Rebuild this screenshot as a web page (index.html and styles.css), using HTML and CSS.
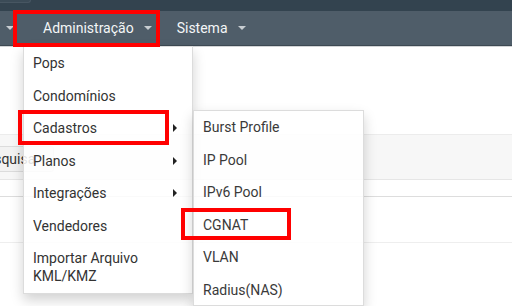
FILE: index.html
```html
<!DOCTYPE html>
<html lang="pt-BR">
<head>
    <meta charset="UTF-8">
    <meta name="viewport" content="width=device-width, initial-scale=1.0">
    <title>Administração - Cadastros</title>
    <link rel="stylesheet" href="styles.css">
</head>
<body>
    <div class="topbar">
        <div class="top-input"></div>
    </div>

    <!-- Main navigation -->
    <nav class="navbar">
        <span class="caret first-caret"></span>
        <a class="nav-item">Administração <span class="caret"></span></a>
        <a class="nav-item">Sistema <span class="caret"></span></a>
    </nav>

    <!-- Page content behind the menus -->
    <main class="content">
        <div class="toolbar">
            <button class="search-btn">Pesquisa</button>
        </div>
        <div class="row row-first"></div>
        <div class="row"></div>
    </main>

    <!-- Administração dropdown -->
    <ul class="dropdown menu-admin">
        <li>Pops</li>
        <li>Condomínios</li>
        <li class="has-sub">Cadastros <span class="arrow"></span></li>
        <li class="has-sub">Planos <span class="arrow"></span></li>
        <li class="has-sub">Integrações <span class="arrow"></span></li>
        <li>Vendedores</li>
        <li>Importar Arquivo<br>KML/KMZ</li>
    </ul>

    <!-- Cadastros submenu -->
    <ul class="dropdown menu-cadastros">
        <li>Burst Profile</li>
        <li>IP Pool</li>
        <li>IPv6 Pool</li>
        <li>CGNAT</li>
        <li>VLAN</li>
        <li>Radius(NAS)</li>
    </ul>

    <!-- Highlight marks -->
    <div class="mark mark-admin"></div>
    <div class="mark mark-cadastros"></div>
    <div class="mark mark-cgnat"></div>
</body>
</html>
```

FILE: styles.css
```css
body {
    margin: 0;
    font-family: Roboto, "Liberation Sans", Arial, sans-serif;
    font-size: 14px;
    background-color: #fff;
    width: 512px;
    height: 306px;
    overflow: hidden;
    position: relative;
}
.topbar {
    height: 11px;
    background-color: #33434f;
}
.top-input {
    width: 30px;
    height: 2px;
    background-color: #3b4b57;
    border: 1px solid #475662;
    border-top: none;
    border-left: none;
    border-radius: 0 0 4px 0;
}
.navbar {
    display: flex;
    align-items: center;
    height: 34px;
    background-color: #4f5d69;
    border-bottom: 1px solid #3d4953;
    box-shadow: 0 1px 0 #d2d4d6;
    color: #f4f6f7;
}
.nav-item {
    display: flex;
    align-items: center;
    padding: 0 12px 0 13px;
}
.caret {
    display: inline-block;
    width: 0;
    height: 0;
    margin-left: 10px;
    border-top: 4px solid #c8cdd2;
    border-left: 4.5px solid transparent;
    border-right: 4.5px solid transparent;
}
.first-caret {
    margin-left: 6px;
    margin-right: 16px;
}
.content {
    padding-top: 88px;
}
.toolbar {
    display: flex;
    align-items: center;
    height: 44px;
    background-color: #f7f7f7;
    border-top: 1px solid #ececec;
    border-bottom: 1px solid #e6e6e6;
}
.search-btn {
    margin-left: -40px;
    margin-top: 3px;
    height: 26px;
    padding: 0 18px 0 17px;
    font-family: inherit;
    font-size: 14px;
    color: #333;
    background-color: #f2f2f2;
    border: 1px solid #dcdcdc;
    border-radius: 3px;
}
.row {
    height: 45px;
    border-bottom: 1px solid #eeeeee;
}
.row-first {
    height: 16px;
    border-bottom-color: #dddddd;
}
.dropdown {
    position: absolute;
    margin: 0;
    padding: 0;
    list-style: none;
    box-sizing: border-box;
    background-color: rgba(255, 255, 255, 0.86);
    border: 1px solid #dcdcdc;
    box-shadow: 0 6px 12px rgba(0, 0, 0, 0.18);
    color: #333;
}
.dropdown li {
    display: flex;
    align-items: center;
    justify-content: space-between;
    padding: 7.25px 15px 7.25px 9px;
    line-height: 18px;
}
.menu-admin {
    left: 23px;
    top: 46px;
    width: 170px;
}
.menu-cadastros {
    left: 193px;
    top: 110px;
    width: 171px;
    height: 196px;
    color: #3a3a3a;
}
.arrow {
    width: 0;
    height: 0;
    border-left: 4px solid #222;
    border-top: 4px solid transparent;
    border-bottom: 4px solid transparent;
}
.mark {
    position: absolute;
    box-sizing: border-box;
    border: 4px solid #ff0000;
}
.mark-admin {
    left: 13px;
    top: 10px;
    width: 147px;
    height: 37px;
}
.mark-cadastros {
    left: 18px;
    top: 110px;
    width: 151px;
    height: 35px;
}
.mark-cgnat {
    left: 181px;
    top: 208px;
    width: 110px;
    height: 32px;
}
```
